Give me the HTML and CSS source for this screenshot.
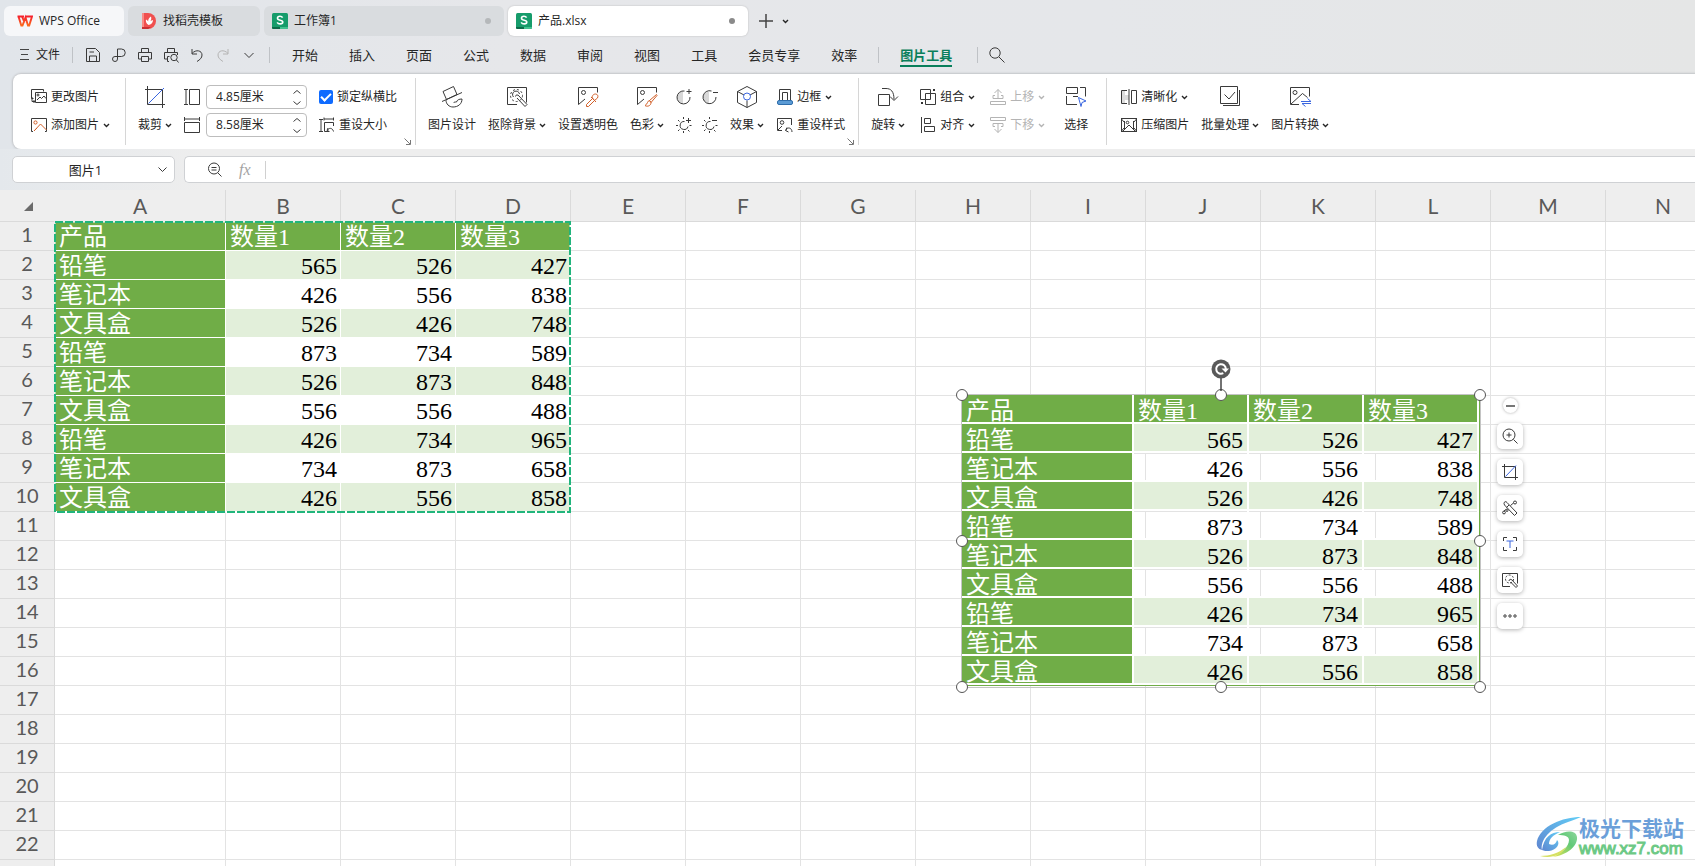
FILE: index.html
```html
<!DOCTYPE html>
<html lang="zh-CN">
<head>
<meta charset="utf-8">
<title>产品.xlsx - WPS Office</title>
<link rel="stylesheet" href="styles.css">
</head>
<body class="app">
<svg class="defs" aria-hidden="true">
  <symbol id="chev" viewBox="0 0 7 5"><path d="M1 1l2.500 2.500L6 1" fill="none" stroke="currentColor" stroke-width="1.400"/></symbol>
  <symbol id="sheet" viewBox="0 0 16 16"><rect width="16" height="16" rx="1.500" fill="#169c6b"/><path d="M0 14h8v2H1.500a1.500 1.500 0 0 1-1.500-1.500z" fill="#0b6b48"/><path d="M8 14h8v.5a1.500 1.500 0 0 1-1.500 1.500H8z" fill="#42c18f"/><path d="M10.600 4.600C10 3.600 9 3.300 8 3.300c-1.400 0-2.500.7-2.500 1.900C5.500 7.900 10.800 6.500 10.800 9c0 1.200-1.200 1.900-2.600 1.900-1.300 0-2.400-.5-3-1.600" fill="none" stroke="#fff" stroke-width="1.600"/></symbol>
  <symbol id="corner" viewBox="0 0 7 7"><path d="M.5.500L6 6M6.500 2v4.500H2" fill="none" stroke="#777"/></symbol>
</svg>

<nav class="tabs">
  <button class="tab tab-home"><svg class="i16" viewBox="0 0 16 16"><defs><linearGradient id="wps" x1="0" y1="0" x2="0" y2="1"><stop offset="0" stop-color="#f5222d"/><stop offset="1" stop-color="#fb6a1c"/></linearGradient></defs><path d="M.5 3.500h6.500M1.500 3.500L4.300 12.500h1.200L8.500 4.500 11 12.500h1.200L15 3.500H9M5 3.500l2.500 6" fill="none" stroke="url(#wps)" stroke-width="1.900"/></svg>WPS Office</button>
  <button class="tab tab-docer"><svg class="i16" viewBox="0 0 16 16"><path d="M1 0h6a8 8 0 0 1 0 16H1z" fill="#f0504f"/><path d="M1 0h2v14H1z" fill="#f98b86"/><path d="M1 14h9l-3 2H1z" fill="#c92f32"/><path d="M7.500 12C5 10.500 4.500 8 5 6.500c1.200.5 1.800 1.200 2.200 2C7 6.500 8 4.500 10 3.500c.6 2 .2 3.500-.6 4.800.8-.8 1.600-1.200 2.600-1.300C12 10 10 11.800 7.500 12z" fill="#fff"/></svg>找稻壳模板</button>
  <button class="tab tab-doc"><svg class="i16"><use href="#sheet"/></svg>工作簿1<i class="dot"></i></button>
  <button class="tab tab-doc tab-on"><svg class="i16"><use href="#sheet"/></svg>产品.xlsx<i class="dot"></i></button>
  <button class="icon-btn add" aria-label="新建"><svg width="14" height="14" viewBox="0 0 14 14"><path d="M7 0v14M0 7h14" stroke="#444" stroke-width="1.500"/></svg></button>
  <button class="icon-btn" aria-label="标签列表"><svg class="chev"><use href="#chev"/></svg></button>
</nav>

<nav class="menu">
  <button class="file"><svg width="9" height="12" viewBox="0 0 9 12"><path d="M0 .5h9M1 5.500h7M0 10.500h9" stroke="#444"/></svg>文件</button>
  <i class="bar"></i>
  <div class="quick">
    <button class="icon-btn" aria-label="保存"><svg width="14" height="14" viewBox="0 0 14 14"><path d="M.5.500h9l4 4v9H.5zM3.500 13.500v-5.500h7v5.500M3.500 4h4.500" class="l"/></svg></button>
    <button class="icon-btn" aria-label="导出"><svg width="14" height="15" viewBox="0 0 14 15"><path d="M5.500 9V1h4a3.700 3.700 0 0 1 0 7.500H3a2.500 2.500 0 1 0 2.500 2.500V9" class="l"/></svg></button>
    <button class="icon-btn" aria-label="打印"><svg width="14" height="15" viewBox="0 0 14 15"><path d="M3.500 4V.500h7V4M3.500 11H.500V4.500h13V11h-3M3.500 8.500h7v5h-7z" class="l"/></svg></button>
    <button class="icon-btn" aria-label="打印预览"><svg width="15" height="15" viewBox="0 0 15 15"><path d="M3.500 4V.500h7V4M5 13.500H3.500V11H.500V4.500h13V7M3.500 11V8.500h2M12.500 12l2 2.500" class="l"/><circle cx="10" cy="9.500" r="3.200" class="l"/></svg></button>
    <button class="icon-btn" aria-label="撤销"><svg width="12" height="13" viewBox="0 0 12 13"><path d="M1 0v5h5M1 4.500C5 0 11 1.500 11 6c0 3-2 4.500-5 6.500" class="l"/></svg></button>
    <button class="icon-btn off" aria-label="恢复"><svg width="12" height="13" viewBox="0 0 12 13"><path d="M11 0v5H6M11 4.500C7 0 1 1.500 1 6c0 3 2 4.500 5 6.500" class="l"/></svg></button>
    <button class="icon-btn" aria-label="更多"><svg width="10" height="7" viewBox="0 0 10 7"><path d="M.5 1L5 5.500 9.500 1" class="l"/></svg></button>
  </div>
  <i class="bar"></i>
  <div class="pages">
    <button>开始</button><button>插入</button><button>页面</button><button>公式</button><button>数据</button><button>审阅</button><button>视图</button><button>工具</button><button>会员专享</button><button>效率</button>
  </div>
  <i class="bar"></i>
  <button class="page-on">图片工具</button>
  <i class="bar"></i>
  <button class="icon-btn search" aria-label="搜索"><svg width="16" height="16" viewBox="0 0 16 16"><circle cx="6" cy="6" r="5.200" class="l"/><path d="M10 10l5.500 5.500" class="l"/></svg></button>
</nav>

<section class="ribbon">
  <div class="group g-image">
    <div class="col">
      <button class="cmd"><svg class="i16" viewBox="0 0 16 16"><path d="M2.500 9.500h-2v-9h12v2M4.500 3.500h11v10h-11zM1 8v4.500h3M2.500 11l1.500 1.500L2.500 14M6 11l3-3 1.500 1.500L13 7l2 2.500" class="l"/><circle cx="7" cy="6" r="1" class="l"/></svg>更改图片</button>
      <button class="cmd"><svg class="i16" viewBox="0 0 16 16"><path d="M2 14.500H.500V1.500h15v13H14" class="l"/><circle cx="4.500" cy="5.500" r="1.600" class="l or"/><path d="M3 14l6.500-7 6 6M3 14l3-3" class="l or"/></svg>添加图片<svg class="chev"><use href="#chev"/></svg></button>
    </div>
  </div>
  <div class="group g-size">
    <div class="col">
      <button class="big"><svg class="i22" viewBox="0 0 22 22"><path d="M1 3.500h17.500V22M3.500 0v18.500H21" class="l"/><path d="M4.500 17.500L20 2" class="l bl"/></svg><span>裁剪<svg class="chev"><use href="#chev"/></svg></span></button>
    </div>
    <div class="col">
      <label class="size"><svg class="i16" viewBox="0 0 16 16"><path d="M0 .5h4M2 .5v15M0 15.500h4M5.500.500h10v15h-10z" class="l"/></svg><span class="spin"><input type="text" value="4.85厘米" aria-label="高度"><span class="arrows"><svg width="8" height="4" viewBox="0 0 8 4"><path d="M.5 3.500L4 .5l3.500 3" class="l"/></svg><svg width="8" height="4" viewBox="0 0 8 4"><path d="M.5.500L4 3.500l3.500-3" class="l"/></svg></span></span></label>
      <label class="size"><svg class="i16" viewBox="0 0 16 16"><path d="M.5 0v4M.5 2h15M15.500 0v4M.5 5.500h15v10H.500z" class="l"/></svg><span class="spin"><input type="text" value="8.58厘米" aria-label="宽度"><span class="arrows"><svg width="8" height="4" viewBox="0 0 8 4"><path d="M.5 3.500L4 .5l3.500 3" class="l"/></svg><svg width="8" height="4" viewBox="0 0 8 4"><path d="M.5.500L4 3.500l3.500-3" class="l"/></svg></span></span></label>
    </div>
    <div class="col">
      <label class="cmd"><input type="checkbox" class="check" checked>锁定纵横比</label>
      <button class="cmd"><svg class="i16" viewBox="0 0 16 16"><path d="M0 2.500h4M2 2.500v12M0 14.500h4M5 .5v3M5 2h10M14.500.5v3M10 14.500H5.500v-9h9V9M9 11l-1 2.500 2.500 1M8.500 13.500c1-3 5-3 6 1" class="l"/></svg>重设大小</button>
    </div>
    <svg class="corner"><use href="#corner"/></svg>
  </div>
  <div class="group g-style">
    <div class="col"><button class="big"><svg class="i22" viewBox="0 0 22 22"><path d="M2 5.500L12.500.500l3.500 8-10.500 5zM1 15.500L21 6.500M5 14c0 4 3 7 7 7 5 0 9-3 9-8-3 0-5 1-5.500 3-1.500 0-2.500 0-3 1" class="l"/></svg><span>图片设计</span></button></div>
    <div class="col"><button class="big"><svg class="i22" viewBox="0 0 22 22"><path d="M11 18.500H1.500v-17h19v15" class="l"/><circle cx="10.500" cy="9.500" r="6" class="l" stroke-dasharray="2 2"/><path d="M9.500 10.500c0-2 2.500-2 3.500-.5l8 8.500-2 2-8-8.500M7.500 11a3.500 3.500 0 1 1 6-3" class="l"/></svg><span>抠除背景<svg class="chev"><use href="#chev"/></svg></span></button></div>
    <div class="col"><button class="big"><svg class="i22" viewBox="0 0 22 22"><path d="M1.500 18.500v-17h19v5M1.500 18.500L8 13" class="l"/><circle cx="6.500" cy="6.500" r="2" class="l"/><path d="M15.500 12.500l-6 6v2h2l6-6M14 11l5 5M15.500 12c-1-2 1-4 3-4s3 2 2 4l-3 2.500z" class="l or"/></svg><span>设置透明色</span></button></div>
    <div class="col"><button class="big"><svg class="i22" viewBox="0 0 22 22"><path d="M1.500 18.500v-17h19v5M1.500 18.500L8 13" class="l"/><circle cx="6.500" cy="6.500" r="2" class="l"/><path d="M20.500 8.500l-7 6 1.500 2 6-7zM13.500 14.500c-2 0-2 4-4.500 5 2 1.500 6 .5 6-3z" class="l or"/></svg><span>色彩<svg class="chev"><use href="#chev"/></svg></span></button></div>
    <div class="col">
      <div class="pair"><button class="icon-btn" aria-label="增加对比度"><svg class="i16" viewBox="0 0 16 16"><path d="M7 2.500a6 6 0 0 0 0 12z" fill="#d8d8d8"/><path d="M8.500 2A6.500 6.500 0 1 0 14 8M13 0v5M10.500 2.500h5" class="l"/></svg></button><button class="icon-btn" aria-label="降低对比度"><svg class="i16" viewBox="0 0 16 16"><path d="M7 2.500a6 6 0 0 0 0 12z" fill="#d8d8d8"/><path d="M9.500 2A6.500 6.500 0 1 0 14 8M11 3.500h5" class="l"/></svg></button></div>
      <div class="pair"><button class="icon-btn" aria-label="增加亮度"><svg class="i16" viewBox="0 0 16 16"><path d="M8.500 4.500a4 4 0 1 0 3.500 5M12.500 1v5M10 3.500h5M7.500 0v2M7.500 14v2M0 8.500h2M13.500 8.500h2M2 3l1.500 1.500M2 14l1.500-1.500M12 13l1.500 1.500" class="l"/></svg></button><button class="icon-btn" aria-label="降低亮度"><svg class="i16" viewBox="0 0 16 16"><path d="M8.500 4.500a4 4 0 1 0 3.500 5M10 3.500h5M7.500 0v2M7.500 14v2M0 8.500h2M13.500 8.500h2M2 3l1.500 1.500M2 14l1.500-1.500M12 13l1.500 1.500" class="l"/></svg></button></div>
    </div>
    <div class="col"><button class="big"><svg class="i22" viewBox="0 0 22 22"><path d="M11 .5l9.500 5v11l-9.500 5-9.500-5v-11zM1.500 5.500l6.500 3.500M20.500 5.500L14 9M11 14.500v7" class="l"/><circle cx="11" cy="10.500" r="3.500" class="l bl"/></svg><span>效果<svg class="chev"><use href="#chev"/></svg></span></button></div>
    <div class="col">
      <button class="cmd"><svg class="i16" viewBox="0 0 16 16"><path d="M2.500 11V.500h11V11M5.500 11V3.500h5V11" class="l"/><rect x=".5" y="11.500" width="15" height="4" rx="1.500" fill="#5b9bd5" stroke="#2f6eab"/></svg>边框<svg class="chev"><use href="#chev"/></svg></button>
      <button class="cmd"><svg class="i16" viewBox="0 0 16 16"><path d="M5 13.500H.500V1.500h14V8M1 13l4-4M10 10.500l-1.500 3 3 1.500M9 13.500c1-4 6-3 6 1.500" class="l"/><circle cx="5" cy="5.500" r="1.800" class="l"/></svg>重设样式</button>
    </div>
    <svg class="corner"><use href="#corner"/></svg>
  </div>
  <div class="group g-arrange">
    <div class="col"><button class="big"><svg class="i22" viewBox="0 0 22 22"><path d="M1.500 8.500h11v11h-11zM5 2.500h4c5 0 8 3 8 11M13 10.500l4 4 4-4" class="l"/></svg><span>旋转<svg class="chev"><use href="#chev"/></svg></span></button></div>
    <div class="col">
      <button class="cmd"><svg class="i16" viewBox="0 0 16 16"><path d="M.5.500h10v10H.500zM5.500 4.500h10v11h-10z" class="l"/><path d="M13 0h2v2h-2zM1 13h2v2H1z" fill="#333"/></svg>组合<svg class="chev"><use href="#chev"/></svg></button>
      <button class="cmd"><svg class="i16" viewBox="0 0 16 16"><path d="M1.500 0v16M4.500 1.500h6v5h-6zM4.500 9.500h10v5h-10z" class="l"/></svg>对齐<svg class="chev"><use href="#chev"/></svg></button>
    </div>
    <div class="col">
      <button class="cmd off" disabled><svg class="i16" viewBox="0 0 16 16"><path d="M.5 12.500h15v3H.500zM5 6.500H3v3h10v-3h-2M8 9V.500M4.500 4L8 .500 11.500 4" class="l"/></svg>上移<svg class="chev"><use href="#chev"/></svg></button>
      <button class="cmd off" disabled><svg class="i16" viewBox="0 0 16 16"><path d="M.5.500h15v3H.500zM5 9.500H3v-3h10v3h-2M8 7v8.500M4.500 12L8 15.500l3.500-3.500" class="l"/></svg>下移<svg class="chev"><use href="#chev"/></svg></button>
    </div>
    <div class="col"><button class="big"><svg class="i22" viewBox="0 0 22 22"><path d="M1.500 1.500h11v6h-11zM15 1.500h5.500v9M1.500 10v8.500H12M8 10.500h5" class="l"/><path d="M13.500 11.500l7.500 3.500-4 1.500-1 4z" class="l bl"/></svg><span>选择</span></button></div>
  </div>
  <div class="group g-batch">
    <div class="col">
      <button class="cmd"><svg class="i16" viewBox="0 0 16 16"><path d="M1 1h3v5h4v5H4v4H1z" fill="#ddd"/><path d="M6 1.500H.500v13H6M8 0v16M10.500 1.500h5v13h-5z" class="l"/></svg>清晰化<svg class="chev"><use href="#chev"/></svg></button>
      <button class="cmd"><svg class="i16" viewBox="0 0 16 16"><path d="M0 1.500h16M0 14.500h16M3 5L.500 2v12L3 11M13 5l2.500-3v12L13 11M3.500 4v8M12.500 4v8M2 14l6-6 6 6" class="l"/><circle cx="6.500" cy="5.500" r="1.300" class="l"/></svg>压缩图片</button>
    </div>
    <div class="col"><button class="big"><svg class="i22" viewBox="0 0 22 22"><path d="M1.500.500h17v17h-17zM4 19.500h16.500V4M5.500 8.500l4.500 4.500 6-7" class="l"/></svg><span>批量处理<svg class="chev"><use href="#chev"/></svg></span></button></div>
    <div class="col"><button class="big"><svg class="i22" viewBox="0 0 22 22"><path d="M10 18.500H1.500v-17h19v9M2 18L13.500 7.500l5 4" class="l"/><circle cx="6" cy="6.500" r="2" class="l"/><path d="M12 15.500h10l-3.500-3M22 17.500H13l3.500 3" class="l bl"/></svg><span>图片转换<svg class="chev"><use href="#chev"/></svg></span></button></div>
  </div>
</section>

<div class="formula">
  <label class="namebox"><input type="text" value="图片1" aria-label="名称框"><svg width="9" height="6" viewBox="0 0 9 6"><path d="M.5.500l4 4 4-4" class="l"/></svg></label>
  <label class="fx"><svg width="14" height="15" viewBox="0 0 14 15"><circle cx="6" cy="6.500" r="5.500" class="l"/><path d="M3.500 5.500h5M3.500 8h5M10 11l3.500 3.500" class="l"/></svg><em>fx</em><input type="text" aria-label="编辑栏"></label>
</div>

<main class="sheet">
  <table class="grid">
    <colgroup><col class="c-row"><col class="c-a"><col span="13" class="c-n"></colgroup>
    <thead><tr><th><i class="tri"></i><th>A<th>B<th>C<th>D<th>E<th>F<th>G<th>H<th>I<th>J<th>K<th>L<th>M<th>N</thead>
    <tbody>
    <tr class="head"><th>1<td>产品<td>数量1<td>数量2<td>数量3<td><td><td><td><td><td><td><td><td><td>
    <tr class="tint"><th>2<td>铅笔<td>565<td>526<td>427<td><td><td><td><td><td><td><td><td><td>
    <tr class="data"><th>3<td>笔记本<td>426<td>556<td>838<td><td><td><td><td><td><td><td><td><td>
    <tr class="tint"><th>4<td>文具盒<td>526<td>426<td>748<td><td><td><td><td><td><td><td><td><td>
    <tr class="data"><th>5<td>铅笔<td>873<td>734<td>589<td><td><td><td><td><td><td><td><td><td>
    <tr class="tint"><th>6<td>笔记本<td>526<td>873<td>848<td><td><td><td><td><td><td><td><td><td>
    <tr class="data"><th>7<td>文具盒<td>556<td>556<td>488<td><td><td><td><td><td><td><td><td><td>
    <tr class="tint"><th>8<td>铅笔<td>426<td>734<td>965<td><td><td><td><td><td><td><td><td><td>
    <tr class="data"><th>9<td>笔记本<td>734<td>873<td>658<td><td><td><td><td><td><td><td><td><td>
    <tr class="tint"><th>10<td>文具盒<td>426<td>556<td>858<td><td><td><td><td><td><td><td><td><td>
    <tr><th>11<td><td><td><td><td><td><td><td><td><td><td><td><td><td>
    <tr><th>12<td><td><td><td><td><td><td><td><td><td><td><td><td><td>
    <tr><th>13<td><td><td><td><td><td><td><td><td><td><td><td><td><td>
    <tr><th>14<td><td><td><td><td><td><td><td><td><td><td><td><td><td>
    <tr><th>15<td><td><td><td><td><td><td><td><td><td><td><td><td><td>
    <tr><th>16<td><td><td><td><td><td><td><td><td><td><td><td><td><td>
    <tr><th>17<td><td><td><td><td><td><td><td><td><td><td><td><td><td>
    <tr><th>18<td><td><td><td><td><td><td><td><td><td><td><td><td><td>
    <tr><th>19<td><td><td><td><td><td><td><td><td><td><td><td><td><td>
    <tr><th>20<td><td><td><td><td><td><td><td><td><td><td><td><td><td>
    <tr><th>21<td><td><td><td><td><td><td><td><td><td><td><td><td><td>
    <tr><th>22<td><td><td><td><td><td><td><td><td><td><td><td><td><td>
    <tr><th>23<td><td><td><td><td><td><td><td><td><td><td><td><td><td>
    </tbody>
  </table>

  <svg class="ants" width="517" height="292"><rect x="1" y="1" width="515" height="290" fill="none" stroke="#fff" stroke-width="1"/><rect x="1" y="1" width="515" height="290" fill="none" stroke="#21b57c" stroke-width="2" stroke-dasharray="8 2"/></svg>

  <figure class="picture">
    <table class="snap">
      <colgroup><col class="p-a"><col span="3" class="p-n"></colgroup>
      <tbody>
      <tr class="head"><td>产品<td>数量1<td>数量2<td>数量3
      <tr class="tint"><td>铅笔<td>565<td>526<td>427
      <tr><td>笔记本<td>426<td>556<td>838
      <tr class="tint"><td>文具盒<td>526<td>426<td>748
      <tr><td>铅笔<td>873<td>734<td>589
      <tr class="tint"><td>笔记本<td>526<td>873<td>848
      <tr><td>文具盒<td>556<td>556<td>488
      <tr class="tint"><td>铅笔<td>426<td>734<td>965
      <tr><td>笔记本<td>734<td>873<td>658
      <tr class="tint"><td>文具盒<td>426<td>556<td>858
      </tbody>
    </table>
    <i class="h h-nw"></i><i class="h h-n"></i><i class="h h-ne"></i><i class="h h-w"></i><i class="h h-e"></i><i class="h h-sw"></i><i class="h h-s"></i><i class="h h-se"></i>
    <svg class="rotate" width="20" height="32" viewBox="0 0 20 32"><path d="M10 18v14" stroke="#444" stroke-width="1.500"/><circle cx="10" cy="10" r="9.500" fill="#595959"/><path d="M12.300 14.200A4.800 4.800 0 1 1 14.800 10" fill="none" stroke="#fff" stroke-width="2"/><path d="M10.500 9.500h7.500L14.500 13.500z" fill="#fff"/></svg>
    <div class="tools">
      <button class="min" aria-label="收起"></button>
      <button class="tool" aria-label="放大"><svg class="i16" viewBox="0 0 16 16"><circle cx="7" cy="7" r="6" class="l"/><path d="M7 4.500v5M4.500 7h5M11.500 11.500l4 4" class="l"/></svg></button>
      <button class="tool" aria-label="裁剪"><svg class="i16" viewBox="0 0 16 16"><path d="M0 2.500h13.500V16M2.500 0v13.500H16" class="l"/><path d="M3.500 12.500L14 1.500" class="l bl"/></svg></button>
      <button class="tool" aria-label="美化"><svg class="i16" viewBox="0 0 16 16"><path d="M2 3.500C2 1.500 4 1 5 2.500l10 10.500-2.500 2.500L2.500 5zM4.500 7.500l2.500-2.500M8.500 5.500L11.500 3M2 11l2.500-2" class="l"/><circle cx="13" cy="2.500" r="1.500" class="l"/><circle cx="2" cy="12.500" r="1.400" class="l"/><circle cx="5" cy="10.500" r="1" class="l"/></svg></button>
      <button class="tool" aria-label="提取文字"><svg class="i16" viewBox="0 0 16 16"><path d="M1.500 5V1.500H5M11 1.500h3.500V5M14.500 11v3.500H11M5 14.500H1.500V11" class="l"/><path d="M4.500 5h7M8 5v7" class="l bl" stroke-width="1.500"/></svg></button>
      <button class="tool" aria-label="抠除背景"><svg class="i16" viewBox="0 0 16 16"><path d="M8 14.500H.500V1.500h15v10M7 9c0-2 2-2 3-1l5.500 6-1.500 1.500L8.500 10" class="l"/><circle cx="7.500" cy="7" r="4" class="l" stroke-dasharray="2 1.500"/></svg></button>
      <button class="tool" aria-label="更多"><svg class="i16" viewBox="0 0 16 16"><circle cx="3" cy="8" r="1.200" class="l"/><circle cx="8" cy="8" r="1.200" class="l"/><circle cx="13" cy="8" r="1.200" class="l"/></svg></button>
    </div>
  </figure>

  <aside class="mark">
    <svg width="46" height="42" viewBox="0 0 46 42">
      <defs><linearGradient id="ma" x1="0" y1="1" x2="1" y2="0"><stop offset="0" stop-color="#5f86d0"/><stop offset="1" stop-color="#62cdf6"/></linearGradient><linearGradient id="mb" x1="0" y1="1" x2="1" y2="0"><stop offset="0" stop-color="#e9e64e"/><stop offset=".6" stop-color="#62c978"/><stop offset="1" stop-color="#8fd69c"/></linearGradient></defs>
      <path d="M45 1C26 1 5 10 1 25c-1 5 1 8 5 9-2-10 8-22 26-28 5-2 9-3 13-5z" fill="url(#ma)"/>
      <path d="M6 34C8 21 15 16 24 16c-7 3-11 7-11 12 4 2 7 0 8-4 4 4-1 10-8 11-3 0-5 0-7-1z" fill="url(#ma)"/>
      <path d="M22 19c8-5 18-5 19 2 1 9-10 18-24 20 8-4 16-10 16-17 0-4-5-5-11-5z" fill="url(#mb)"/>
      <path d="M4 40c10 0 19-3 26-9-4 8-15 12-26 9z" fill="#d6e063"/>
    </svg>
    <div><b>极光下载站</b><span>www.xz7.com</span></div>
  </aside>
</main>
</body>
</html>
```

FILE: styles.css
```css
* { box-sizing: border-box; }

.app {
  margin: 0;
  height: 100vh;
  display: flex;
  flex-direction: column;
  overflow: hidden;
  font: 12px/16px "Open Sans", "Noto Sans CJK SC", sans-serif;
  color: #262626;
  background: linear-gradient(90deg, #e1e5ea, #e6e7ea 30%, #e5e7ea 65%, #e5e6e6);
}

button, input { font: inherit; color: inherit; }
button { border: 0; padding: 0; background: none; white-space: nowrap; }
svg { flex: none; display: block; }
.defs { position: absolute; width: 0; height: 0; }
.l { fill: none; stroke: #3a3a3a; stroke-width: 1; }
.or { stroke: #d2602a; }
.bl { stroke: #3a66e0; }
.i16 { width: 16px; height: 16px; }
.i22 { width: 22px; height: 22px; }
.chev { width: 7px; height: 5px; }
.icon-btn { display: flex; align-items: center; justify-content: center; }
.off { color: #b4b4b4; }
.off .l { stroke: #b4b4b4; }

/* Document tabs */
.tabs { display: flex; align-items: center; gap: 4px; padding: 6px 4px 0; }
.tab {
  display: flex;
  align-items: center;
  gap: 6px;
  height: 30px;
  padding: 0 13px;
  border-radius: 6px;
  background: #d9dcdf;
}
.tab-home { width: 120px; gap: 6px; background: #f6f7f9; }
.tab-docer { width: 132px; }
.tab-doc { width: 240px; padding: 0 13px 0 8px; }
.tab-on { background: #fff; box-shadow: 0 0 2px #b8b8b8; }
.dot { width: 6px; height: 6px; margin-left: auto; border-radius: 50%; background: #b5b8ba; }
.tab-on .dot { background: #8a8a8a; }
.add { margin: 0 5px 0 7px; }

/* Menu line */
.menu { display: flex; align-items: center; height: 38px; padding-left: 20px; font-size: 13px; }
.file { display: flex; align-items: center; gap: 7px; font-size: 12px; }
.bar { width: 1px; height: 16px; background: #bfc2c6; }
.file + .bar { margin: 0 13px 0 12px; }
.quick { display: flex; align-items: center; gap: 12px; margin-right: 13px; }
.quick .icon-btn { width: 14px; height: 16px; }
.pages { display: flex; gap: 31px; margin: 0 21px 0 22px; }
.page-on {
  margin: 0 25px 0 21px;
  padding: 3px 0 2px;
  border-bottom: 2px solid #0a7f5b;
  color: #0a7f5b;
  font-weight: 700;
}
.search { margin-left: 11px; }

/* Ribbon */
.ribbon {
  display: flex;
  height: 75px;
  margin-left: 13px;
  padding: 4px 0;
  background: #fff;
  border-radius: 8px 0 0 8px;
  box-shadow: 0 0 2px 1px #c3c5c8;
}
.group { position: relative; display: flex; gap: 12px; padding: 7px 18px 3px 12px; border-right: 1px solid #d6d6d6; }
.g-image { padding-left: 18px; padding-right: 15px; }
.g-style { padding-right: 13px; }
.g-style .col:last-of-type { margin-left: 1px; }
.g-arrange { gap: 15px; }
.g-arrange .col:last-of-type { margin-left: 4px; }
.g-batch { border: 0; padding-left: 14px; }
.col { display: flex; flex-direction: column; gap: 4px; }
.cmd { display: flex; align-items: center; gap: 4px; height: 24px; }
.size { display: flex; align-items: center; gap: 6px; height: 24px; }
.big { display: flex; flex-direction: column; align-items: center; height: 52px; gap: 9px; padding-top: 1px; }
.big span { display: flex; align-items: center; gap: 3px; }
.spin { display: flex; align-items: center; width: 101px; height: 24px; padding-right: 5px; border: 1px solid #bdbdbd; border-radius: 4px; }
.spin input { flex: 1; min-width: 0; border: 0; padding: 0 0 0 9px; background: none; outline: 0; }
.arrows { display: flex; flex-direction: column; gap: 7px; }
.check {
  appearance: none;
  width: 14px;
  height: 14px;
  margin: 0;
  border-radius: 2px;
  background: #0f6bff;
  display: grid;
  place-items: center;
}
.check::after { content: ""; width: 8px; height: 4px; margin-bottom: 3px; border: solid #fff; border-width: 0 0 2px 2px; transform: rotate(-45deg); }
.corner { position: absolute; right: 4px; bottom: 0; width: 7px; height: 7px; }
.pair { display: flex; align-items: center; gap: 10px; height: 24px; }

/* Formula bar */
.formula { display: flex; gap: 9px; padding: 7px 0 7px 12px; background: linear-gradient(90deg, #e4e8ec, #eeeeee 12%); }
.namebox, .fx { display: flex; align-items: center; height: 27px; background: #fff; border: 1px solid #cfd1d4; }
.namebox { width: 163px; border-radius: 5px; padding-right: 7px; font-size: 13px; }
.namebox input { flex: 1; min-width: 0; border: 0; padding: 0; text-align: center; background: none; }
.fx { flex: 1; border-right: 0; border-radius: 5px 0 0 5px; padding-left: 23px; }
.fx em { margin: 0 14px 0 17px; font: italic 16px/20px "Liberation Serif", serif; color: #a3a3a3; }
.fx input { flex: 1; height: 18px; border: 0; border-left: 1px solid #d0d0d0; }

/* Worksheet */
.sheet { position: relative; flex: 1; min-height: 0; overflow: hidden; background: #fff; }
.grid { table-layout: fixed; width: 1721px; border-collapse: separate; border-spacing: 0; }
.c-row { width: 55px; }
.c-a { width: 171px; }
.c-n { width: 115px; }
.grid th {
  height: 29px;
  padding: 0 0 4px;
  border: solid #dadada;
  border-width: 0 1px 1px 0;
  background: #eeeeee;
  color: #595959;
  font: 400 20px/24px Lato, "Open Sans", sans-serif;
}
.grid thead th { height: 32px; padding: 0; font-size: 21px; }
.grid thead th:first-child { border-color: #eeeeee #eeeeee #dadada; }
.grid td { height: 29px; padding: 0; border: solid #e3e3e3; border-width: 0 1px 1px 0; }
.tri { display: block; width: 0; margin: 2px auto 0 24px; border: solid transparent; border-width: 0 0 9px 9px; border-bottom-color: #6b6b6b; }

.grid .head td:nth-child(-n+5), .grid .tint td:nth-child(-n+5), .grid .data td:nth-child(-n+5),
.snap td {
  padding: 3px 3px 0 4px;
  border-color: #fff;
  color: #000;
  font: 24px/25px "Liberation Serif", "Noto Sans CJK SC", serif;
  text-align: right;
  white-space: nowrap;
}
.grid .head td:nth-child(-n+5), .grid tr td:nth-child(2):not(:empty),
.grid .head td:nth-child(2),
.snap .head td, .snap tr td:first-child {
  background: #70ad47;
  color: #fff;
  text-align: left;
}
.grid .tint td:nth-child(n+3):nth-child(-n+5), .snap .tint td:nth-child(n+2) { background: #e2efda; }

.ants { position: absolute; left: 54px; top: 31px; }

/* Floating picture */
.picture { position: absolute; left: 961px; top: 204px; width: 520px; height: 294px; margin: 0; border: 1px solid #c4c4c4; }
.snap { table-layout: fixed; width: 517px; border-collapse: separate; border-spacing: 0; border-right: 1px solid #70ad47; border-bottom: 1px solid #70ad47; }
.p-a { width: 172px; }
.p-n { width: 115px; }
.snap td { height: 29px; padding: 5px 4px 0; border: solid #fff; border-width: 0 2px 2px 0; line-height: 22px; }
.h { position: absolute; width: 12px; height: 12px; margin: -6px; border: 1px solid #555; border-radius: 50%; background: #fff; }
.h-nw, .h-n, .h-ne { top: 0; }
.h-w, .h-e { top: 50%; }
.h-sw, .h-s, .h-se { top: 100%; }
.h-nw, .h-w, .h-sw { left: 0; }
.h-n, .h-s { left: 50%; }
.h-ne, .h-e, .h-se { left: 100%; }
.rotate { position: absolute; left: 249px; top: -36px; }

.tools { position: absolute; left: 535px; top: 3px; display: flex; flex-direction: column; align-items: center; gap: 10px; }
.min { width: 15px; height: 15px; border-radius: 50%; background: #fff linear-gradient(#777, #777) center / 9px 2px no-repeat; box-shadow: 0 0 3px #aaa; }
.tool { display: grid; place-items: center; width: 26px; height: 26px; border-radius: 5px; background: #fff; box-shadow: 0 1px 4px #b5b5b5; }

/* Site mark */
.mark { position: absolute; right: 11px; bottom: 8px; display: flex; align-items: center; }
.mark div { display: flex; flex-direction: column; margin-left: -3px; }
.mark b { font: 700 21px/24px "Noto Sans CJK SC", sans-serif; color: #6b9fd9; }
.mark span { font: 17px/19px "Liberation Sans", sans-serif; color: #6cc985; -webkit-text-stroke: 1px #6cc985; }
```
